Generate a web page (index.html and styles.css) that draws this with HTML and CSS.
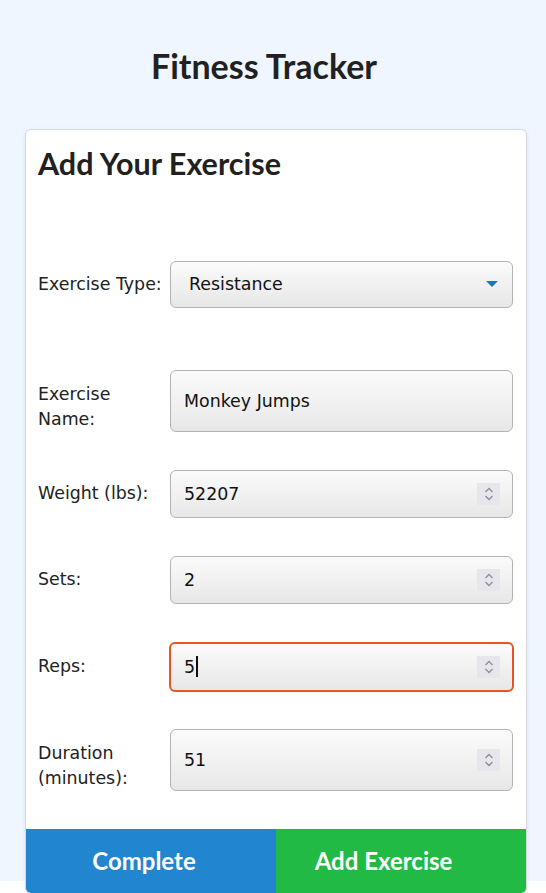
FILE: index.html
```html
<!DOCTYPE html>
<html lang="en">
<head>
<meta charset="utf-8">
<title>Fitness Tracker</title>
<link rel="stylesheet" href="styles.css">
</head>
<body>
<div class="page">
  <h1 class="title">Fitness Tracker</h1>
  <div class="card">
    <h2 class="card-title">Add Your Exercise</h2>
    <div class="form">
      <div class="row row-type">
        <label class="label">Exercise Type:</label>
        <div class="field select">
          <span class="value value-select">Resistance</span>
          <svg class="arrow" width="12" height="6" viewBox="0 0 12 6"><path d="M0 0H12L6 6Z" fill="#1a78b2"/></svg>
        </div>
      </div>
      <div class="row">
        <label class="label label-wrap">Exercise Name:</label>
        <div class="field"><span class="value">Monkey Jumps</span></div>
      </div>
      <div class="row">
        <label class="label">Weight (lbs):</label>
        <div class="field num"><span class="value">52207</span><span class="spin"><svg width="10" height="16" viewBox="0 0 10 16"><path d="M1.5 6L5 2.5L8.5 6M1.5 10L5 13.5L8.5 10" fill="none" stroke="#8e8e96" stroke-width="1.3"/></svg></span></div>
      </div>
      <div class="row">
        <label class="label">Sets:</label>
        <div class="field num"><span class="value">2</span><span class="spin"><svg width="10" height="16" viewBox="0 0 10 16"><path d="M1.5 6L5 2.5L8.5 6M1.5 10L5 13.5L8.5 10" fill="none" stroke="#8e8e96" stroke-width="1.3"/></svg></span></div>
      </div>
      <div class="row">
        <label class="label">Reps:</label>
        <div class="field num focused"><span class="value">5<span class="caret"></span></span><span class="spin"><svg width="10" height="16" viewBox="0 0 10 16"><path d="M1.5 6L5 2.5L8.5 6M1.5 10L5 13.5L8.5 10" fill="none" stroke="#8e8e96" stroke-width="1.3"/></svg></span></div>
      </div>
      <div class="row row-last">
        <label class="label label-wrap">Duration (minutes):</label>
        <div class="field num"><span class="value">51</span><span class="spin"><svg width="10" height="16" viewBox="0 0 10 16"><path d="M1.5 6L5 2.5L8.5 6M1.5 10L5 13.5L8.5 10" fill="none" stroke="#8e8e96" stroke-width="1.3"/></svg></span></div>
      </div>
    </div>
    <div class="buttons">
      <button class="btn btn-blue">Complete</button>
      <button class="btn btn-green">Add Exercise</button>
    </div>
  </div>
</div>
</body>
</html>
```
FILE: styles.css
```css
html { background: #ffffff; }
body { margin: 0; font-family: "DejaVu Sans", sans-serif; color: #212121; }
.page {
  background: linear-gradient(#eff6ff calc(100% - 12px), #ffffff calc(100% - 12px));
  padding-top: 1px;
  box-sizing: border-box;
}
.title {
  font-family: Lato, sans-serif;
  font-weight: 700;
  font-size: 34px;
  line-height: 1;
  text-align: center;
  margin: 48px 18px 0 0;
  color: #212121;
}
.card {
  margin: 47px 0 0 26px;
  width: 500px;
  background: #fff;
  border-radius: 5px;
  box-shadow: 0 0 0 1px #d8dbe0, 0 1px 4px 0 rgba(0,0,0,0.15);
  overflow: hidden;
}
.card-title {
  font-family: Lato, sans-serif;
  font-weight: 700;
  font-size: 30.5px;
  line-height: 1;
  margin: 0;
  padding: 18px 12px 0;
}
.form {
  padding: 82px 13px 38px 12px;
  display: flex;
  flex-direction: column;
  gap: 38px;
}
.row-type { margin-bottom: 24px; }
.row-last { margin-top: -1px; }
.row {
  display: grid;
  grid-template-columns: 132px 1fr;
  align-items: center;
}
.label {
  font-size: 17.4px;
  line-height: 25px;
  color: #222;
}
.label-wrap { padding-top: 12px; }
.field {
  align-self: stretch;
  min-height: 47px;
  box-sizing: border-box;
  border: 1px solid #b3b3b3;
  border-radius: 6px;
  background: linear-gradient(#fbfbfb, #e7e7e7);
  display: flex;
  align-items: center;
  padding: 0 12px 0 13px;
  font-size: 17.4px;
  color: #111;
}
.num { min-height: 48px; }
.select { padding-left: 18px; padding-right: 14px; }
.value { flex: 1; display: flex; align-items: center; }
.arrow { display: block; }
.focused {
  border: 2px solid #e95420;
  margin: 0 -1px;
  min-height: 50px;
  padding-left: 13px;
  padding-right: 12px;
}
.caret {
  display: inline-block;
  width: 2px;
  height: 21px;
  background: #111;
  margin-left: 1px;
}
.spin {
  width: 23px;
  height: 22px;
  background: #e6e6ec;
  display: flex;
  align-items: center;
  justify-content: center;
}
.spin svg { display: block; }
.buttons {
  display: grid;
  grid-template-columns: 1fr 1fr;
}
.btn {
  border: 0;
  margin: 0;
  height: 64px;
  padding: 0;
  font-family: Lato, sans-serif;
  font-weight: 700;
  font-size: 24px;
  color: #fff;
}
.btn-blue { background: #2185d0; padding-right: 14px; }
.btn-green { background: #21ba45; padding-right: 35px; }
```
